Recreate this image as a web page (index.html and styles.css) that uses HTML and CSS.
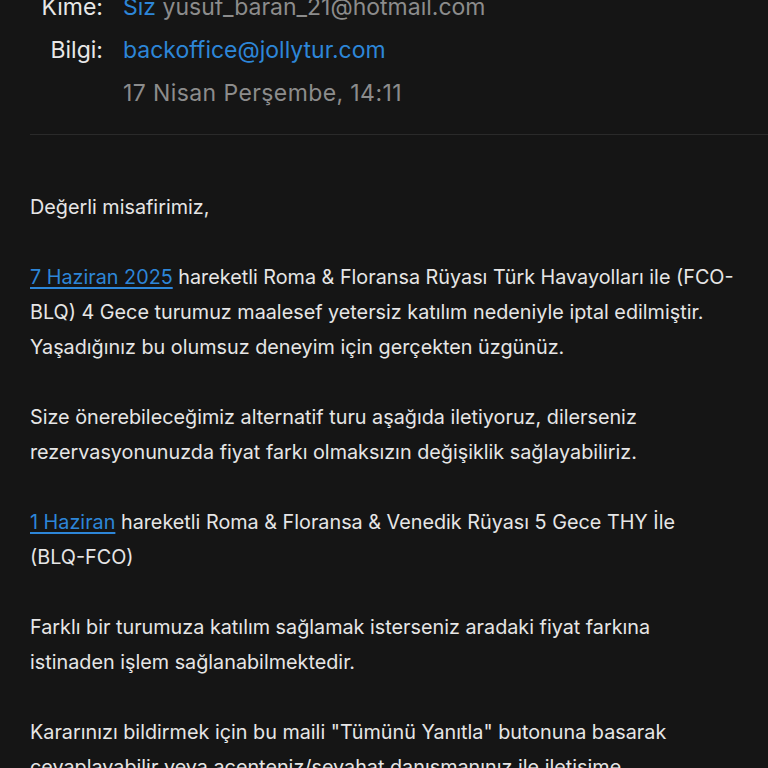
FILE: index.html
```html
<!DOCTYPE html>
<html lang="tr">
<head>
<meta charset="utf-8">
<link rel="stylesheet" href="styles.css">
</head>
<body>
<div class="mail">
  <div class="meta">
    <div class="label">Kime:</div>
    <div class="value"><span class="link">Siz</span> <span class="muted">yusuf_baran_21@hotmail.com</span></div>
    <div class="label">Bilgi:</div>
    <div class="value"><span class="link">backoffice@jollytur.com</span></div>
    <div class="label"></div>
    <div class="value muted date">17 Nisan Perşembe, 14:11</div>
  </div>
  <div class="divider"></div>
  <div class="body">
    <p>Değerli misafirimiz,</p>
    <p><a class="ulink">7 Haziran 2025</a> hareketli Roma &amp; Floransa Rüyası Türk Havayolları ile (FCO-<br>BLQ) 4 Gece turumuz maalesef yetersiz katılım nedeniyle iptal edilmiştir.<br>Yaşadığınız bu olumsuz deneyim için gerçekten üzgünüz.</p>
    <p>Size önerebileceğimiz alternatif turu aşağıda iletiyoruz, dilerseniz<br>rezervasyonunuzda fiyat farkı olmaksızın değişiklik sağlayabiliriz.</p>
    <p><a class="ulink">1 Haziran</a> hareketli Roma &amp; Floransa &amp; Venedik Rüyası 5 Gece THY İle<br>(BLQ-FCO)</p>
    <p>Farklı bir turumuza katılım sağlamak isterseniz aradaki fiyat farkına<br>istinaden işlem sağlanabilmektedir.</p>
    <p>Kararınızı bildirmek için bu maili "Tümünü Yanıtla" butonuna basarak<br>cevaplayabilir veya acenteniz/seyahat danışmanınız ile iletişime</p>
  </div>
</div>
</body>
</html>
```
FILE: styles.css
```css
html, body {
  margin: 0;
  padding: 0;
  background: #151515;
  overflow: hidden;
}
.mail {
  margin-top: -14px;
  font-family: "Inter", "Roboto", sans-serif;
}
.meta {
  display: grid;
  grid-template-columns: 103px 1fr;
  column-gap: 20px;
  font-size: 23px;
  line-height: 43px;
}
.label {
  text-align: right;
  color: #e8e8e8;
}
.value {
  color: #e8e8e8;
  white-space: nowrap;
}
.date {
  letter-spacing: 0.4px;
}
.link {
  color: #2d86d8;
}
.muted {
  color: #8c8c8c;
}
.divider {
  margin: 19px 0 0 30px;
  height: 1px;
  background: #2a2a2a;
}
.body {
  padding: 55px 30px 0 30px;
  font-family: "Inter", "Roboto", sans-serif;
  font-size: 19.8px;
  line-height: 35px;
  color: #e6e6e6;
  white-space: nowrap;
}
.body p {
  margin: 0 0 35px 0;
}
.ulink {
  color: #2d86d8;
  text-decoration: underline;
  text-decoration-thickness: 2px;
  text-underline-offset: 3px;
}
```
